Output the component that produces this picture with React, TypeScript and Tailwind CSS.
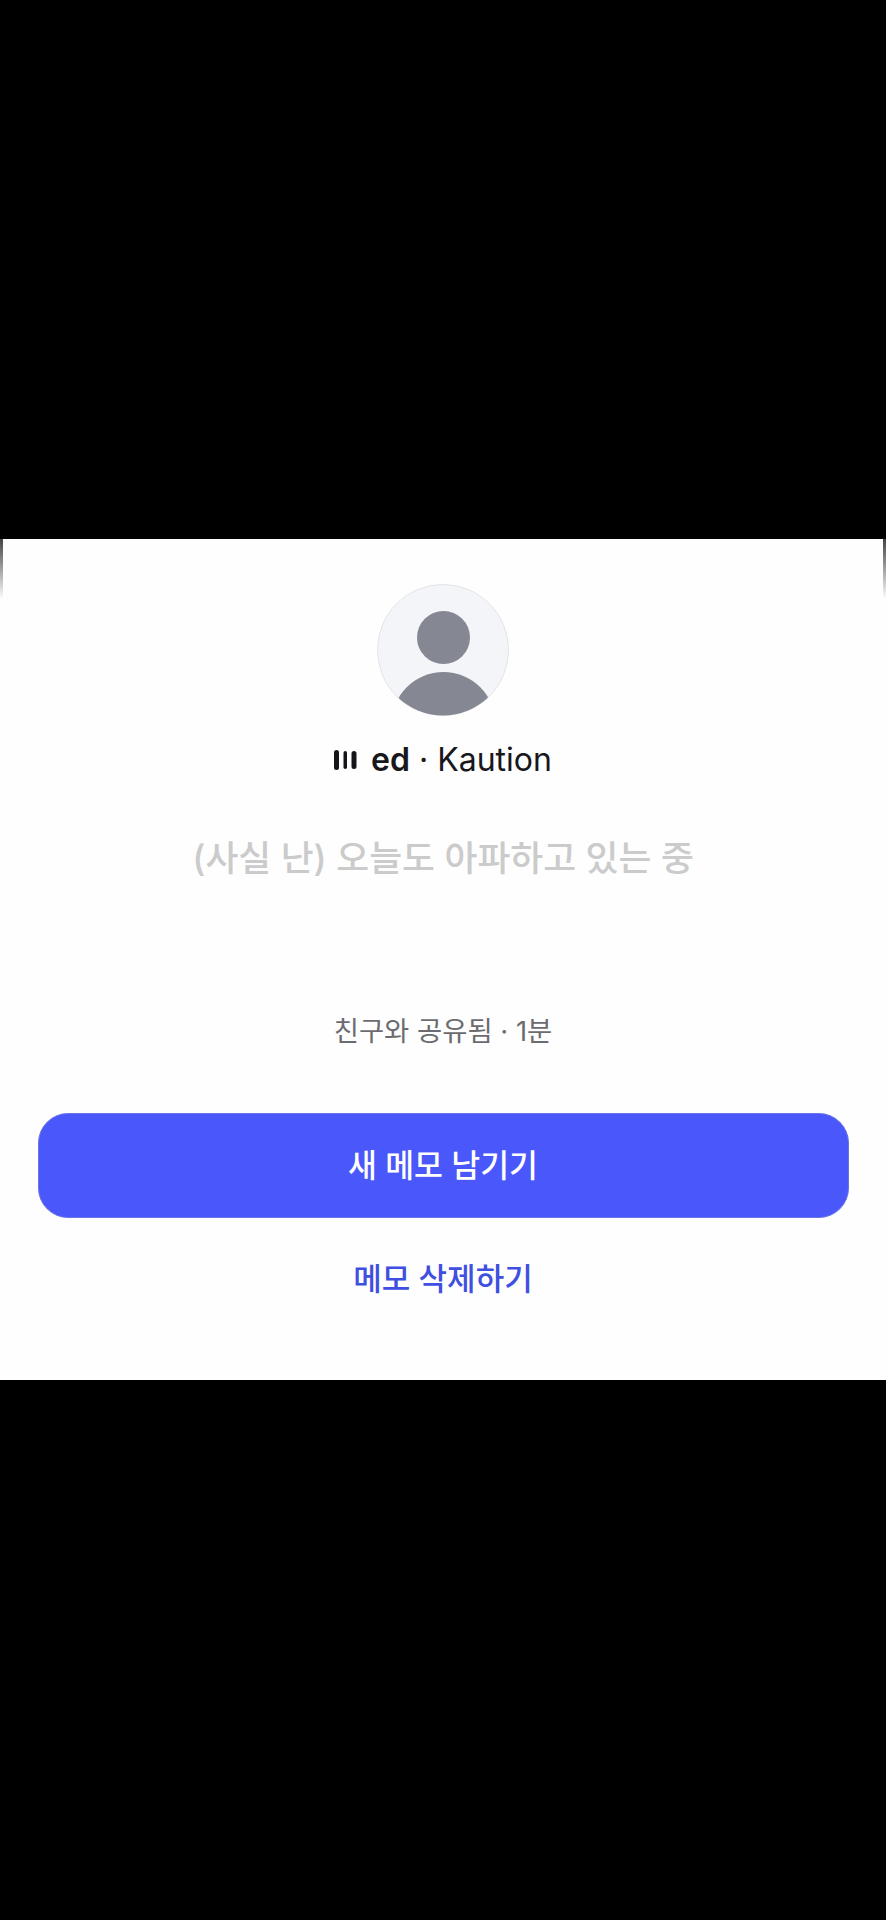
import React from 'react';

const FONT = "font-['Inter','Noto_Sans_CJK_KR',sans-serif]";

function DefaultAvatar() {
  return (
    <svg width="132" height="134" viewBox="0 0 132 134" className="block">
      <defs>
        <clipPath id="avatar-clip">
          <circle cx="66" cy="67" r="65.5" />
        </clipPath>
      </defs>
      <circle cx="66" cy="67" r="65.5" fill="#f4f5f9" stroke="#e4e4e8" strokeWidth="1" />
      <circle cx="66.5" cy="54.5" r="26.5" fill="#858892" />
      <g clipPath="url(#avatar-clip)">
        <circle cx="66.5" cy="141" r="52" fill="#858892" />
      </g>
    </svg>
  );
}

function BarsIcon() {
  return (
    <svg width="23" height="20" viewBox="0 0 23 20" className="block">
      <rect x="0" y="0" width="5" height="20" rx="2.5" fill="#15151a" />
      <rect x="9.5" y="1" width="3.5" height="18" rx="1.75" fill="#15151a" />
      <rect x="17.5" y="1" width="5" height="18" rx="2.5" fill="#15151a" />
    </svg>
  );
}

export default function App() {
  return (
    <div className={`min-h-[1920px] w-full bg-black flex flex-col ${FONT}`}>
      <div className="h-[539px]" />

      <div className="relative h-[841px] bg-[#fefefe] flex flex-col items-center">
        {/* shaded rounded corners at the top of the sheet */}
        <div className="absolute left-0 top-0 h-[60px] w-[3px] bg-gradient-to-b from-[#444444] to-transparent" />
        <div className="absolute right-0 top-0 h-[60px] w-[3px] bg-gradient-to-b from-[#444444] to-transparent" />

        <div className="mt-[44px]">
          <DefaultAvatar />
        </div>

        <div className="mt-[23px] h-[40px] flex items-center text-[32px] leading-[40px] text-[#17171c]">
          <BarsIcon />
          <span className="ml-[14px] font-semibold">ed</span>
          <span className="ml-[9px]">·</span>
          <span className="ml-[9px]">Kaution</span>
        </div>

        <p className="mt-[54px] h-[48px] text-[35.75px] leading-[48px] font-medium text-[#cbcbcb]">
          (사실 난) 오늘도 아파하고 있는 중
        </p>

        <p className="mt-[131px] h-[36px] text-[27.4px] leading-[36px] text-[#6c6c70]">
          친구와 공유됨 · 1분
        </p>

        <button className="mt-[64px] w-[811px] h-[105px] shrink-0 rounded-[30px] border border-[#6a74e6] bg-[#4a58fb] pt-[3px] text-white text-[31.4px] font-medium">
          새 메모 남기기
        </button>

        <button className="mt-[41px] h-[40px] text-[31px] leading-[40px] font-medium text-[#3f4fe0]">
          메모 삭제하기
        </button>
      </div>

      <div className="flex-1" />
    </div>
  );
}
